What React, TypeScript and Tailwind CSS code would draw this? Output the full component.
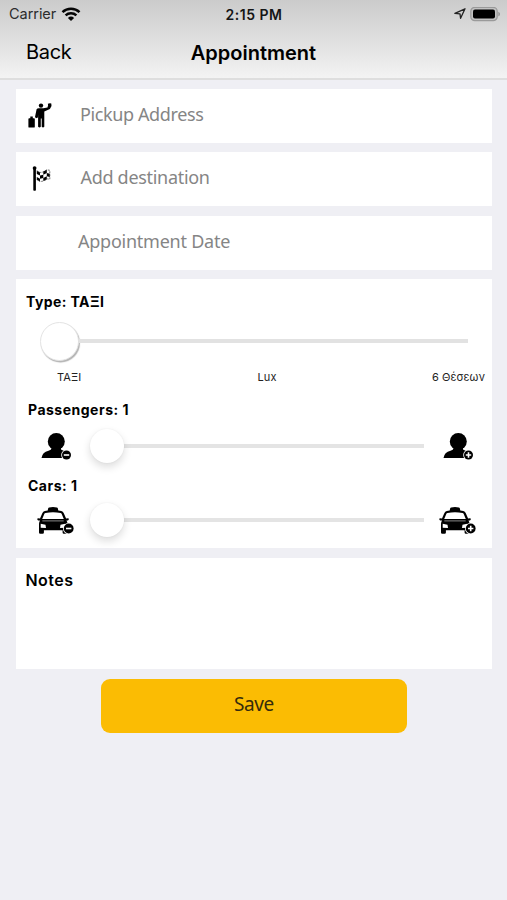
const WifiIcon = () => (
  <svg className="h-[15px] w-[20px]" viewBox="0 0 20 15" fill="none" stroke="#050505" strokeWidth="2.5">
    <path d="M1.5 5.1a12.3 12.3 0 0 1 17 0" />
    <path d="M4.6 8.4a7.9 7.9 0 0 1 10.8 0" />
    <path d="M6.9 10.9a4.6 4.6 0 0 1 6.2 0L10 14z" fill="#050505" stroke="none" />
  </svg>
);

const LocationIcon = () => (
  <svg className="h-3 w-3" viewBox="0 0 12 12" fill="none" stroke="#222" strokeWidth="1.3" strokeLinejoin="round">
    <path d="M.9 5.4 11 .8 6.600 10.300 6 5.900z" />
  </svg>
);

const BatteryIcon = () => (
  <svg className="h-[15px] w-[31px]" viewBox="0 0 31 15">
    <rect x=".8" y=".3" width="26.4" height="13.400" rx="4" fill="#c2c2c2" stroke="#9a9a9a" strokeWidth="1.2" />
    <rect x="3" y="2.500" width="22" height="9" rx="2" fill="#000" />
    <path d="M28.4 4.700c2 .8 2 3.800 0 4.600z" fill="#909090" />
  </svg>
);

const TravelerIcon = () => (
  <svg className="h-[26px] w-6" viewBox="0 0 24 26">
    <circle cx="13" cy="2.600" r="2.200" />
    <path d="M8.600 6.300q.7-1 2.200-1h4.500l4.200-.9.600-2.200-.3-1.400q2.200-1.200 3.500-.2l.2 2.300-1.600 3.200-5.600 2.300v15.300q-1.300 1.400-2.600 0V15.500h-.9v8.200q-1.300 1.400-2.700 0V11.500L9.900 14.500 8 15.300 7 14z" />
    <path d="M2.300 15.300v-1.800h2.500v1.800h1.200q.8 0 .8.800v7.600q0 .9-.8.900H1.200q-.8 0-.8-.9v-7.600q0-.8.800-.8z" />
  </svg>
);

const FlagIcon = () => (
  <svg className="h-[26px] w-5" viewBox="0 0 20 26">
    <circle cx="2.600" cy="2.100" r="1.900" />
    <path d="M1.300 3h2.600v21.200q-1.300 1.300-2.600 0z" />
    <path d="M4.800 4.800 8 6.400v3.200L4.800 7.900zM11.300 5.600l3.500-1.800v3.300l-3.500 1.600zM8 9.600l3.300-.9v3.200l-3.300.9zM14.800 7.100l3 .7v3.100l-3-.7zM4.800 11 8 12.800v2.600l-3.200-1.600zM11.300 11.900l3.500-1.700v3.200l-3.500 1.500z" />
    <path d="M4.800 4.800 8 6.400q3 .3 6.800-2.600l3 .5v8.900l-2.500-.3q-4 2.800-7.300 2.500l-3.200-1.600" fill="none" stroke="#333" strokeWidth=".7" strokeDasharray="2 1" />
  </svg>
);

const Badge = ({ plus, x, y, r }: { plus?: boolean; x: number; y: number; r: number }) => (
  <g transform={`translate(${x} ${y})`}>
    <circle r={r + 0.8} fill="#fff" />
    <circle r={r} fill="#000" />
    <path d={plus ? 'M-2.700 0h5.400M0-2.700v5.400' : 'M-2.700 0h5.400'} stroke="#fff" strokeWidth="1.600" />
  </g>
);

const PersonIcon = ({ plus }: { plus?: boolean }) => (
  <svg className="h-[27px] w-[31px]" viewBox="0 0 31 27">
    <circle cx="15.300" cy="8.500" r="8.500" />
    <path d="M10.500 13h9.500v3.500l5 2.500v6H.500q.8-5.700 7-7.200 3-.8 3-2.500z" />
    <Badge plus={plus} x={25.500} y={22} r={4.500} />
  </svg>
);

const TaxiIcon = ({ plus }: { plus?: boolean }) => (
  <svg className="h-[28px] w-[38px]" viewBox="0 0 38 28">
    <path d="M10.700 4.500 11.200 2.200q.2-.7 1-.8 3.800-.8 7.600 0 .8.100 1 .8l.5 2.300 3 .6q1.800.4 2.500 2.100l2.300 5.300 2-.2q.7.100.7.900 0 1-1 1.200l-1.300.2q1 1.500 1 3.500v8.400q0 1.300-1.300 1.300h-2.300q-1.300 0-1.300-1.300v-2.200H6.900v2.200q0 1.300-1.300 1.300H3.300Q2 27.800 2 26.500v-8.400q0-2 1-3.500l-1.700-.2q-1-.2-1-1.200 0-.8.700-.9l2 .2 2.300-5.300q.7-1.700 2.500-2.100z" />
    <path d="M8.500 6.900q7.500-1.300 15 0 .9.200 1.200 1l2.100 5.100H5.200l2.100-5.100q.3-.8 1.200-1z" fill="#fff" />
    <path d="M5.300 14.900h21.400" stroke="#aaa" strokeWidth=".8" />
    <path d="m3.700 17.800 4.800 1 .5 3.300-5.300-.3zM28.300 17.800l-4.800 1-.5 3.300 5.300-.3z" fill="#fff" />
    <Badge plus={plus} x={31.700} y={22.500} r={4.900} />
  </svg>
);

const fields = [
  { label: 'Pickup Address', icon: TravelerIcon, iconBox: 'pl-3 pt-[1px]', text: 'pl-[64px] tracking-[-0.38px]' },
  { label: 'Add destination', icon: FlagIcon, iconBox: 'pl-4', text: 'pl-[64.500px] tracking-[-0.3px]' },
  { label: 'Appointment Date', icon: null, iconBox: '', text: 'pl-[62px] tracking-[-0.24px]' },
];

const CountSlider = ({ icon: Icon, className }: { icon: typeof PersonIcon; className: string }) => (
  <div className={`flex h-[34px] items-center ${className}`}>
    <div className="flex w-[50px] shrink-0 justify-center"><Icon /></div>
    <div className="ml-[9px] flex w-[334px] items-center">
      <div className="z-10 size-[34px] shrink-0 rounded-full bg-white shadow-[0_4px_8px_rgba(0,0,0,0.14),0_0_2px_rgba(0,0,0,0.06)]" />
      <div className="h-1 flex-1 bg-[#e4e4e4]" />
    </div>
    <div className="ml-[9px] flex w-[50px] shrink-0 justify-center"><Icon plus /></div>
  </div>
);

const App = () => {
  return (
    <main className="min-h-[900px] w-full bg-[#efeff4] font-['Inter',sans-serif] text-black">
      <header className="h-20 border-b-2 border-[#dedede] bg-linear-to-b from-[#cbcbcb] to-[#f3f3f3]">
        <div className="grid h-7 grid-cols-3 items-center pl-[9px] pr-[6px] text-[14px]">
          <div className="flex items-center gap-[5px] text-[#2c2c2c]">
            <span className="text-[14.500px] tracking-[-0.05px]">Carrier</span>
            <WifiIcon />
          </div>
          <span className="-ml-[2px] text-center font-semibold tracking-[0.52px] text-[#151515]">2:15 PM</span>
          <div className="flex items-center justify-end gap-[4px]">
            <LocationIcon />
            <BatteryIcon />
          </div>
        </div>
        <div className="grid h-12 grid-cols-[1fr_auto_1fr] items-center px-[25px] text-[20px]">
          <span className="pl-px tracking-[-0.3px]">Back</span>
          <h1 className="pt-px font-semibold tracking-[0px]">Appointment</h1>
        </div>
      </header>

      <div className="flex flex-col gap-[9.600px] pl-4 pr-[15px] pt-[8.700px]">
        {fields.map(({ label, icon: Icon, iconBox, text }) => (
          <div key={label} className="grid h-[54px] items-center bg-white">
            {Icon && <div className={`col-start-1 row-start-1 ${iconBox}`}><Icon /></div>}
            <span className={`col-start-1 row-start-1 pb-1 font-['Noto_Sans',sans-serif] text-[18px] leading-6 text-[#858585] ${text}`}>
              {label}
            </span>
          </div>
        ))}

        <section className="h-[268.900px] bg-white pt-[13px]">
          <h2 className="pl-[10px] text-[14px] font-bold leading-5 tracking-[0.42px]">Type: ΤΑΞΙ</h2>
          <div className="ml-6 mt-[9px] flex h-10 w-[428px] items-center">
            <div className="size-[39px] shrink-0 rounded-full border border-[#e4e4e4] bg-white shadow-[1px_1.500px_1px_rgba(0,0,0,0.3)]" />
            <div className="h-1 flex-1 bg-[#e2e2e2]" />
          </div>
          <div className="mt-[8px] grid grid-cols-3 pl-[41px] pr-[7px] text-[11px] leading-4 tracking-[0.1px] text-[#222]">
            <span>ΤΑΞΙ</span>
            <span className="pr-2 text-center">Lux</span>
            <span className="text-right">6 Θέσεων</span>
          </div>
          <h2 className="mt-[15px] pl-3 text-[14px] font-bold leading-5 tracking-[0.5px]">Passengers: 1</h2>
          <CountSlider icon={PersonIcon} className="mt-[9px] pl-[15px]" />
          <h2 className="mt-[13px] pl-3 text-[14px] font-bold leading-5 tracking-[0.5px]">Cars: 1</h2>
          <CountSlider icon={TaxiIcon} className="mt-[7px] pl-[15px]" />
        </section>

        <section className="h-[111px] bg-white pl-[9.500px] pt-[10px]">
          <h2 className="text-[16px] font-semibold leading-6 tracking-[0.45px]">Notes</h2>
        </section>

        <button className="ml-[85px] h-[54px] w-[306px] rounded-[9px] bg-[#fbbc03] pb-[2px] font-['Noto_Sans',sans-serif] text-[19px] tracking-[-0.4px] text-[#352b0c]">
          Save
        </button>
      </div>
    </main>
  );
};

export default App;
